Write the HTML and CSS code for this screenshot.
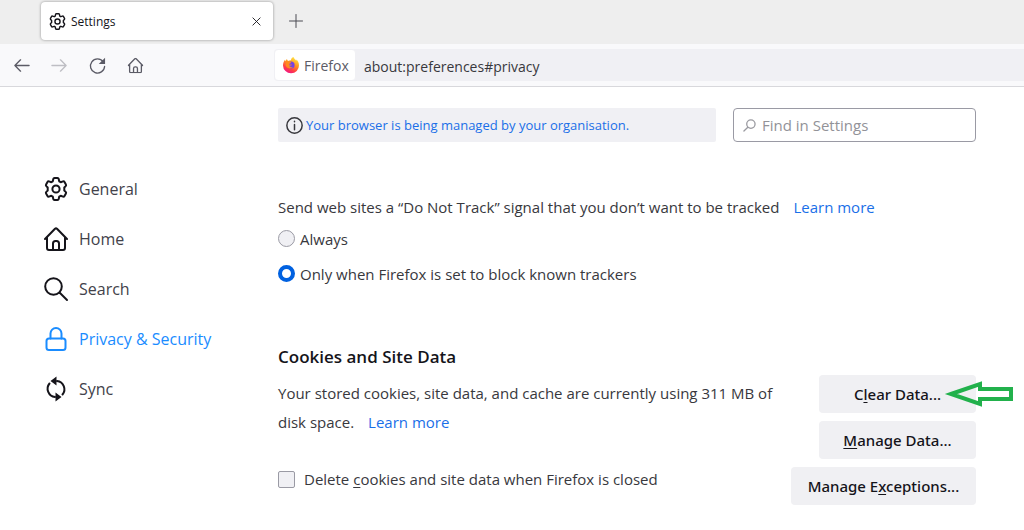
FILE: index.html
```html
<!DOCTYPE html>
<html lang="en-GB">
<head>
    <meta charset="UTF-8">
    <meta name="viewport" content="width=device-width, initial-scale=1.0">
    <title>Settings</title>
    <link rel="stylesheet" href="styles.css">
</head>
<body>

<!-- Shared icons -->
<svg class="sprite" aria-hidden="true">
    <symbol id="gear" viewBox="0 0 24 24">
        <path d="M10.500 1h3q1 0 1.200 1l.5 2.300 1.500.9 2.300-.8q1-.3 1.500.6l1.400 2.500q.5.900-.2 1.600L20.300 10.500v3l1.400 1.400q.7.700.2 1.600l-1.400 2.500q-.5.900-1.500.6l-2.300-.8-1.500.9-.5 2.300q-.2 1-1.200 1h-3q-1 0-1.200-1l-.5-2.300-1.500-.9-2.300.8q-1 .3-1.500-.6l-1.400-2.500q-.5-.9.2-1.600l1.400-1.400v-3L2.300 9.100q-.7-.7-.2-1.600L3.500 5q.5-.9 1.500-.6l2.300.8 1.500-.9L9.300 2q.2-1 1.200-1z"/>
        <circle cx="12" cy="12" r="3.600"/>
    </symbol>
    <symbol id="home" viewBox="0 0 24 24">
        <path d="M1 12 11 1.800q1-.9 2 0L23 12M3 10.500V21q0 2 2 2h14q2 0 2-2V10.500M9 23v-6.500q0-2.500 2.500-2.500h1q2.500 0 2.500 2.500V23"/>
    </symbol>
</svg>

<div class="tab-strip">
    <div class="tab">
        <svg class="tab-icon"><use href="#gear"/></svg>
        <span class="tab-title">Settings</span>
        <button class="tab-close" aria-label="Close tab">
            <svg viewBox="0 0 10 10"><path d="M1 1l8 8M9 1L1 9"/></svg>
        </button>
    </div>
    <button class="new-tab" aria-label="New tab">
        <svg viewBox="0 0 14 14"><path d="M7 .5v13M.5 7h13"/></svg>
    </button>
</div>

<div class="toolbar">
    <div class="nav-buttons">
        <button aria-label="Back"><svg viewBox="0 0 18 18"><path d="M17 9H2M8 3L2 9l6 6"/></svg></button>
        <button aria-label="Forward" disabled><svg viewBox="0 0 18 18"><path d="M1 9h15M10 3l6 6-6 6"/></svg></button>
        <button aria-label="Reload"><svg viewBox="0 0 18 18"><path d="M15 5A7.500 7.500 0 1 0 16.500 10"/><path class="solid" d="M17 .8v6.700h-6.700z"/></svg></button>
        <button aria-label="Home"><svg viewBox="-1 -1 26 26"><use href="#home" width="24" height="24"/></svg></button>
    </div>
    <div class="url-bar">
        <span class="identity">
            <svg class="firefox" viewBox="0 0 16 16">
                <defs>
                    <linearGradient id="flame" x1="0.800" y1="0" x2="0.300" y2="1">
                        <stop offset="0" stop-color="#fff04a"/>
                        <stop offset=".4" stop-color="#ff9a1f"/>
                        <stop offset=".75" stop-color="#ff3b47"/>
                        <stop offset="1" stop-color="#f0148c"/>
                    </linearGradient>
                </defs>
                <path fill="url(#flame)" d="M10.500 0c.3 1.600 2 2.200 2.700 3.800l.4-1.300C15 4 16 6 16 8.200A8 8 0 0 1 0 8.500C0 6.300.7 4.300 2 2.700l.5 1.500L3.800 2l1.200 2c1-.7 2-.9 3-.8 0-1.300.9-2.500 2.500-3.200z"/>
                <circle cx="8" cy="8" r="3.600" fill="#7542e5"/>
                <path fill="#ff8a1d" d="M3.300 4.500c2-.5 3 .2 4.900.7-.2 1.200-2 1.200-2 2 .3.900 1.800.3 2.800.3-.6 1.400-2.300 1.300-3 1.300.8 1.300 2.300 1.700 4 1-2.500 3-7 1.500-7.500-2z"/>
            </svg>
            Firefox
        </span>
        <input class="url" type="text" aria-label="Address" value="about:preferences#privacy">
    </div>
</div>

<div class="page">
    <nav class="categories">
        <a href="#general"><svg><use href="#gear"/></svg>General</a>
        <a href="#home-page"><svg><use href="#home"/></svg>Home</a>
        <a href="#search"><svg viewBox="0 0 24 24"><circle cx="9.500" cy="9.500" r="8.300"/><path d="M15.500 15.500l7.500 7.500"/></svg>Search</a>
        <a href="#privacy" class="selected"><svg viewBox="0 0 24 24"><rect x="2.500" y="11.500" width="19" height="11.500" rx="2.500"/><path d="M6.500 11.500V6.500a5.500 5.500 0 0 1 11 0v5"/></svg>Privacy &amp; Security</a>
        <a href="#sync"><svg viewBox="0 0 24 24"><path d="M5.500 6.500A8.300 8.300 0 0 0 11 20M18.500 17.500A8.300 8.300 0 0 0 13 4"/><path class="solid" d="M12.500-.5v9l-6-4.500zM11.500 15.500v9l6-4.500z"/></svg>Sync</a>
    </nav>

    <main>
        <div class="top-row">
            <div class="banner">
                <svg viewBox="0 0 16 16"><circle cx="8" cy="8" r="7.200"/><path d="M8 7v5M8 4v.5"/></svg>
                <a href="#policies">Your browser is being managed by your organisation.</a>
            </div>
            <div class="search">
                <svg viewBox="0 0 14 14"><circle cx="8.500" cy="5.500" r="4.500"/><path d="M5.200 8.800L1 13"/></svg>
                <input type="search" aria-label="Find in Settings" placeholder="Find in Settings">
            </div>
        </div>

        <section class="tracking" role="radiogroup" aria-labelledby="dnt">
            <p><span id="dnt">Send web sites a “Do Not Track” signal that you don’t want to be tracked</span><a class="learn" href="#dnt-help">Learn more</a></p>
            <div class="option">
                <input type="radio" name="dnt" id="always">
                <label for="always">Always</label>
            </div>
            <div class="option">
                <input type="radio" name="dnt" id="known" checked>
                <label for="known">Only when Firefox is set to block known trackers</label>
            </div>
        </section>

        <section>
            <h2>Cookies and Site Data</h2>
            <div class="site-data">
                <div class="description">
                    <p>Your stored cookies, site data, and cache are currently using 311 MB of disk space.<a class="learn" href="#storage-help">Learn more</a></p>
                    <div class="option delete">
                        <input type="checkbox" id="delete">
                        <label for="delete">Delete <u>c</u>ookies and site data when Firefox is closed</label>
                    </div>
                </div>
                <div class="buttons">
                    <div class="pointed">
                        <button>C<u>l</u>ear Data...</button>
                        <svg class="arrow" viewBox="0 0 68 26"><path d="M5 13L34 3v5h31v10H34v5z"/></svg>
                    </div>
                    <button><u>M</u>anage Data...</button>
                    <button class="wide">Manage E<u>x</u>ceptions...</button>
                </div>
            </div>
        </section>
    </main>
</div>

</body>
</html>
```
FILE: styles.css
```css
* {
    box-sizing: border-box;
}
body {
    margin: 0;
    background-color: #fff;
    color: #38383d;
    font-family: "Open Sans", "Noto Sans", sans-serif;
    font-size: 15px;
}
button, input {
    font: inherit;
    color: inherit;
}
p, h2 {
    margin: 0;
}
a {
    color: #1a6fe8;
    text-decoration: none;
}
u {
    text-underline-offset: 2px;
}
svg {
    flex: none;
    fill: none;
    stroke: currentColor;
    stroke-width: 2;
    stroke-linejoin: round;
    stroke-linecap: round;
    overflow: visible;
}
.solid {
    fill: currentColor;
    stroke: none;
}
.sprite {
    display: none;
}

/* Tabs */
.tab-strip {
    display: flex;
    align-items: flex-start;
    height: 44px;
    padding: 2px 0 0 41px;
    background-color: #eee;
}
.tab {
    display: flex;
    align-items: center;
    width: 232px;
    height: 38px;
    padding: 0 9px 0 8px;
    background-color: #fff;
    border-radius: 4px;
    box-shadow: 0 0 3px rgba(0, 0, 0, 0.4);
    color: #15141a;
}
.tab-icon {
    width: 17px;
    height: 17px;
}
.tab-title {
    flex: 1;
    margin-left: 5px;
    font-size: 12px;
}
.tab-close, .new-tab, .nav-buttons button {
    display: flex;
    align-items: center;
    justify-content: center;
    padding: 0;
    border: none;
    background: none;
}
.tab-close {
    width: 16px;
    height: 16px;
}
.tab-close svg {
    width: 9px;
    height: 9px;
    stroke-width: 1;
}
.new-tab {
    width: 24px;
    height: 38px;
    margin-left: 11px;
    color: #4a4a52;
}
.new-tab svg {
    width: 14px;
    height: 14px;
    stroke-width: 1;
}

/* Toolbar */
.toolbar {
    display: flex;
    align-items: center;
    height: 43px;
    background-color: #f9f9fb;
    border-bottom: 1px solid #d8d8dc;
}
.nav-buttons {
    display: flex;
    gap: 14px;
    width: 274px;
    padding-left: 9px;
    color: #5b5b66;
}
.nav-buttons button {
    width: 24px;
    height: 24px;
}
.nav-buttons button:disabled {
    color: #bebec4;
}
.nav-buttons svg {
    width: 17px;
    height: 17px;
    stroke-width: 1.4;
}
.nav-buttons button:last-child svg {
    stroke-width: 2;
}
.url-bar {
    display: flex;
    flex: 1;
    height: 32px;
    background-color: #f0f0f4;
    border-radius: 4px 0 0 4px;
}
.identity {
    display: flex;
    align-items: center;
    gap: 5px;
    width: 82px;
    padding-left: 8px;
    background-color: #fff;
    border: 1px solid #f0f0f4;
    border-radius: 4px;
    color: #5b5b66;
    font-size: 14px;
}
.firefox {
    width: 16px;
    height: 16px;
    stroke: none;
}
.url {
    flex: 1;
    padding: 2px 8px 0;
    border: none;
    background: none;
    font-size: 14px;
}

/* Page */
.page {
    display: flex;
    padding: 21px 48px 0 44px;
}
.categories {
    width: 234px;
    padding-top: 56px;
}
.categories a {
    display: flex;
    align-items: center;
    gap: 11px;
    height: 50px;
    color: #42424a;
    font-size: 16px;
}
.categories svg {
    width: 24px;
    height: 24px;
    color: #15141a;
}
.categories .selected, .categories .selected svg {
    color: #1a8cff;
}
main {
    flex: 1;
}
.top-row {
    display: flex;
    gap: 17px;
}
.banner {
    display: flex;
    flex: 1;
    align-items: center;
    gap: 3px;
    height: 34px;
    padding-left: 8px;
    background-color: #f0f0f4;
    border-radius: 2px;
    color: #38383d;
    font-size: 13px;
}
.banner svg {
    width: 17px;
    height: 17px;
    stroke-width: 1.4;
}
.search {
    display: flex;
    align-items: center;
    gap: 6px;
    width: 243px;
    padding: 0 9px;
    border: 1px solid #9a9aa4;
    border-radius: 4px;
}
.search svg {
    width: 13px;
    height: 13px;
    color: #9a9aa0;
    stroke-width: 1.4;
}
.search input {
    width: 100%;
    padding: 0;
    border: none;
    background: none;
    outline: none;
}
.search input::placeholder {
    color: #929298;
}
.tracking {
    padding-top: 51px;
    line-height: 28px;
}
.learn {
    margin-left: 14px;
}
.option {
    display: flex;
    align-items: center;
    gap: 5px;
    height: 35px;
}
.option input {
    flex: none;
    appearance: none;
    width: 17px;
    height: 17px;
    margin: 0;
    background-color: #f0f0f4;
    border: 1px solid #9a9aa4;
    border-radius: 2px;
}
.option input[type="radio"] {
    border-radius: 50%;
}
.option input[type="radio"]:checked {
    background-color: #fff;
    border: 4px solid #0061e0;
}
h2 {
    padding-top: 52px;
    color: #15141a;
    font-size: 17px;
    font-weight: 600;
    line-height: 28px;
}
.site-data {
    display: flex;
    padding-top: 4px;
}
.description {
    flex: 1;
    padding-top: 4px;
    line-height: 29px;
}
.delete {
    gap: 9px;
    margin-top: 25px;
}
.buttons {
    display: flex;
    flex-direction: column;
    align-items: flex-end;
    gap: 8px;
    width: 185px;
}
.buttons button {
    display: block;
    width: 157px;
    height: 38px;
    padding: 0;
    border: none;
    border-radius: 4px;
    background-color: #f0f0f3;
    color: #15141a;
    font-family: "Noto Sans", "Open Sans", sans-serif;
    font-weight: 500;
}
.buttons .wide {
    width: 100%;
}
.pointed {
    position: relative;
}
.arrow {
    position: absolute;
    top: 6px;
    left: 127px;
    width: 68px;
    height: 26px;
    color: #22b14c;
    stroke-width: 4;
    stroke-linejoin: miter;
}
```
